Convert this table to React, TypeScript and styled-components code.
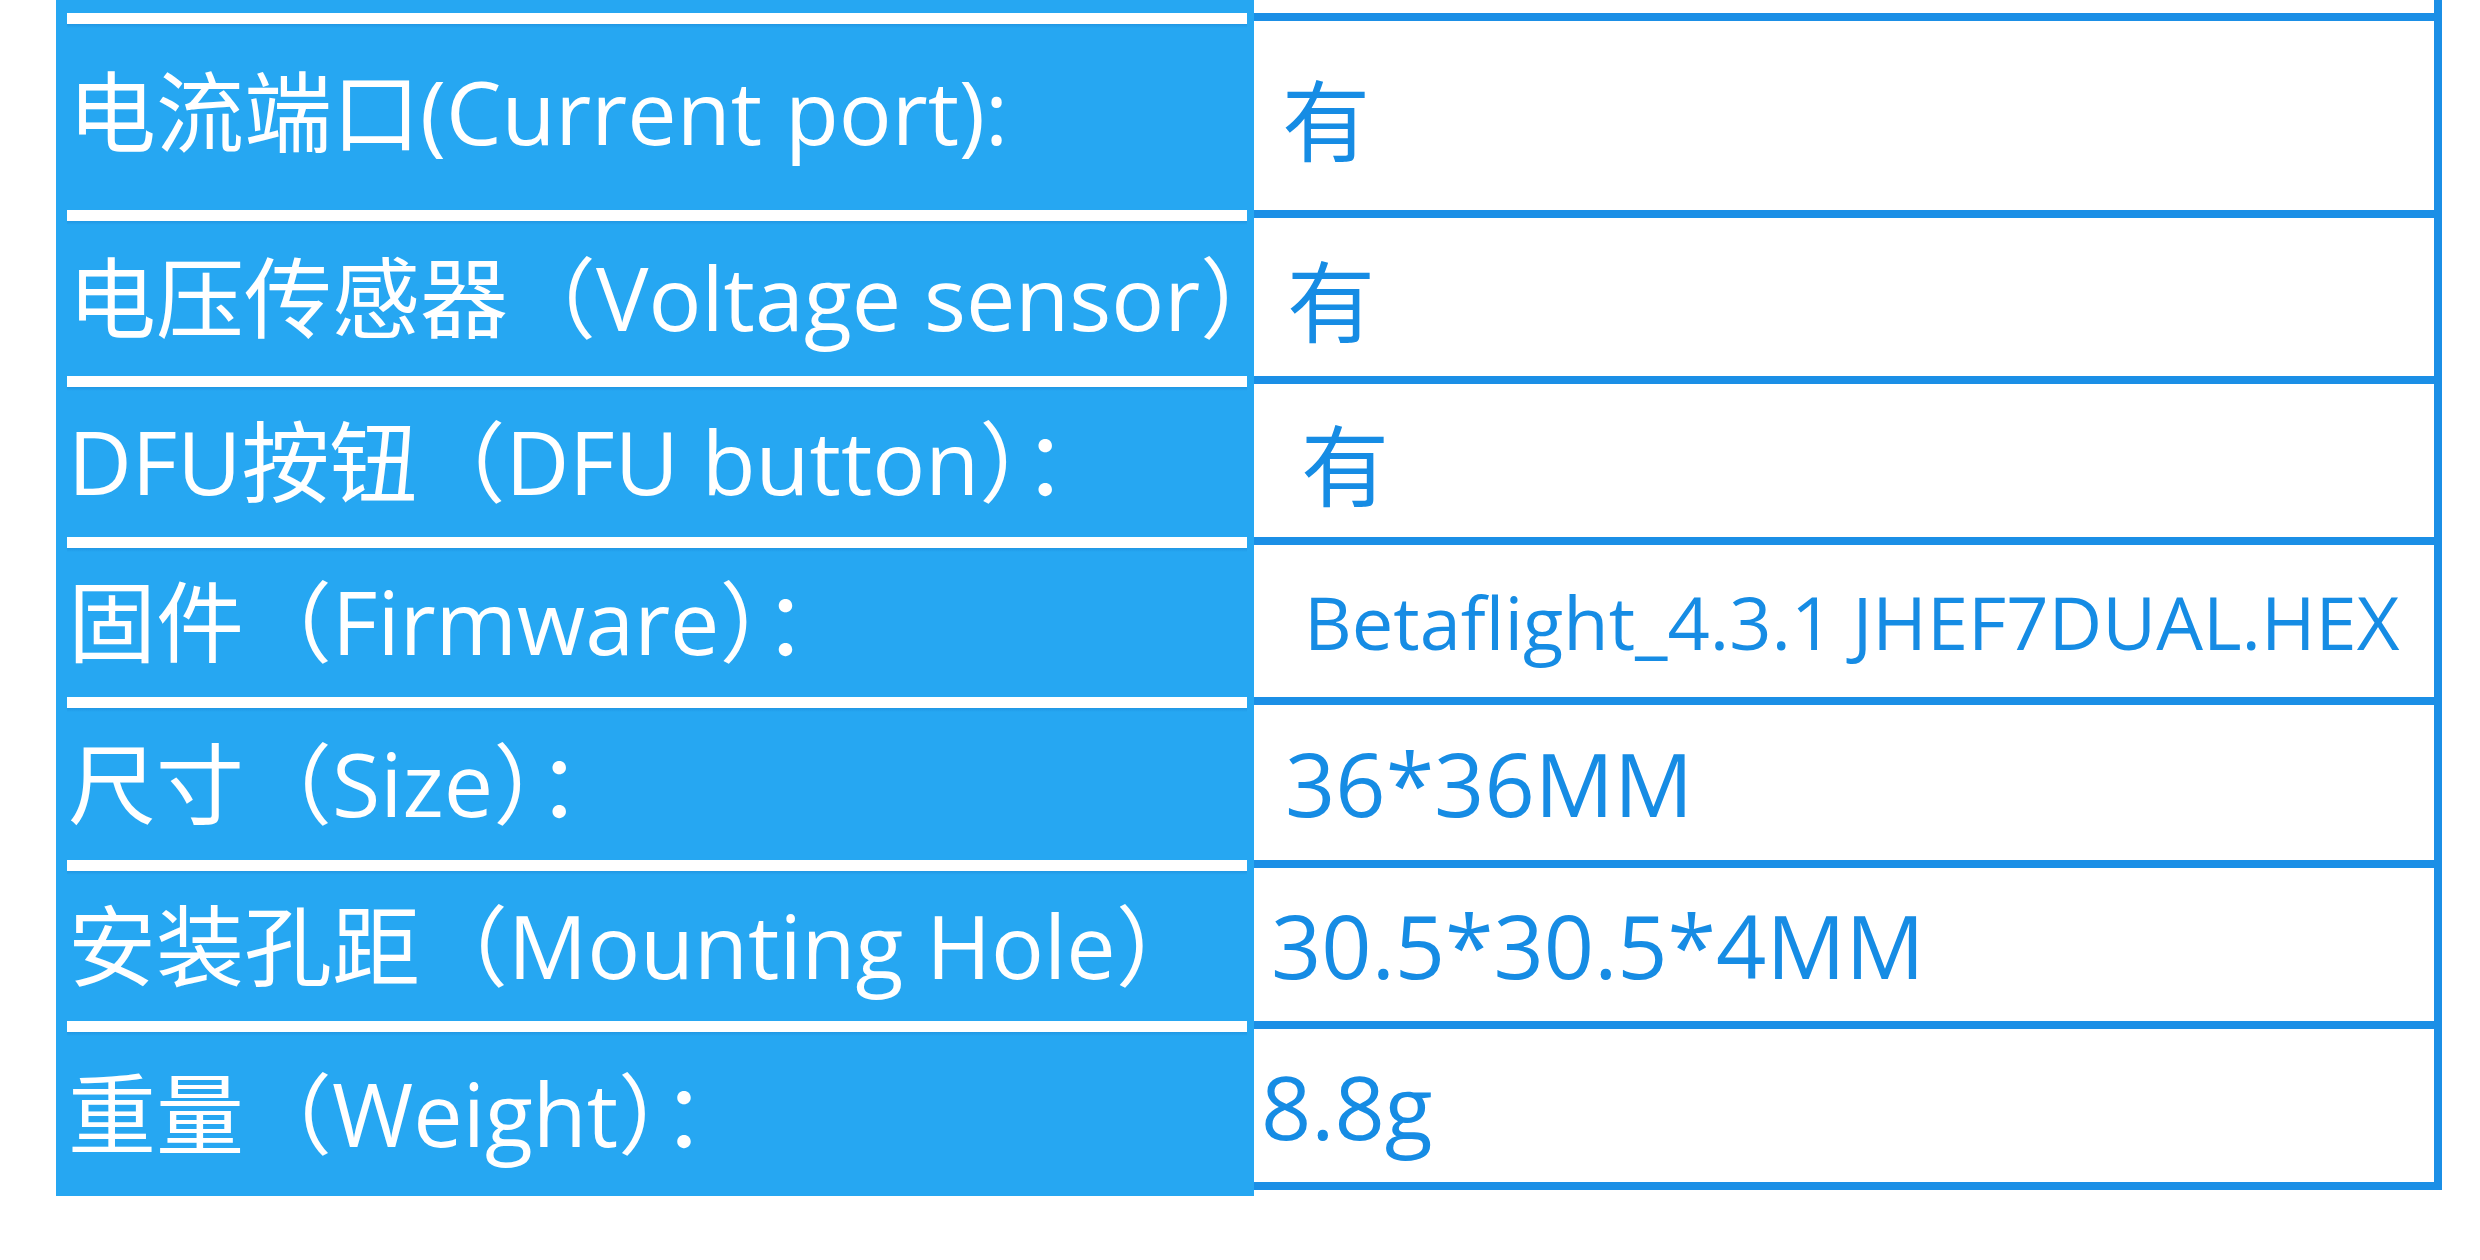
import React from 'react';
import styled, { createGlobalStyle } from 'styled-components';

const labelBlue = "#26a7f2"
const lineBlue = "#1b8fe6"
const textBlue = "#168ce4"

const GlobalStyle = createGlobalStyle`
  html, body {
    margin: 0;
    padding: 0;
    background: #fff;
  }
  body {
    font-family: "Open Sans", "Noto Sans CJK SC", sans-serif;
  }
`

const Page = styled.div`
  width: 2480px;
  height: 1260px;
  overflow: hidden;
  padding-left: 56px;
  box-sizing: border-box;
  background: #fff;
`

const SpecTable = styled.div`
  display: flex;
  flex-direction: column;
  width: 2386px;
`

const Row = styled.div<{ $h: number }>`
  display: grid;
  grid-template-columns: 1198px 1188px;
  min-height: ${p => p.$h}px;
`

const Label = styled.div<{ $stub?: boolean; $lift?: number }>`
  display: flex;
  align-items: center;
  padding-left: 12px;
  padding-bottom: ${p => p.$lift ?? 0}px;
  color: #fff;
  font-size: 88px;
  white-space: nowrap;
  background: ${p => p.$stub
    ? labelBlue
    : `linear-gradient(#fff, #fff) 11px 0 / calc(100% - 18px) 11px no-repeat,
       linear-gradient(rgba(20, 120, 200, 0.35), rgba(20, 120, 200, 0)) 11px 11px / calc(100% - 18px) 4px no-repeat,
       ${labelBlue}`};
`

const Value = styled.div<{ $indent: number; $small?: boolean; $stub?: boolean; $last?: boolean }>`
  display: flex;
  align-items: center;
  box-sizing: border-box;
  padding-left: ${p => p.$indent}px;
  color: ${textBlue};
  font-size: ${p => (p.$small ? 74 : 88)}px;
  white-space: nowrap;
  background: #fff;
  border-top: ${p => (p.$stub ? 'none' : `8px solid ${lineBlue}`)};
  border-right: 8px solid ${lineBlue};
  border-bottom: ${p => (p.$last ? `8px solid ${lineBlue}` : 'none')};
  margin-bottom: ${p => (p.$last ? 6 : 0)}px;
`

interface ISpec {
  label: string
  value: string
  h: number
  indent: number
  small?: boolean
  lift?: number
}

const specs: ISpec[] = [
  { label: "电流端口(Current port):", value: "有", h: 197, indent: 28, lift: 10 },
  { label: "电压传感器（Voltage sensor）", value: "有", h: 166, indent: 33 },
  { label: "DFU按钮（DFU button）：", value: "有", h: 161, indent: 47 },
  { label: "固件（Firmware）：", value: "Betaflight_4.3.1 JHEF7DUAL.HEX", h: 160, indent: 50, small: true },
  { label: "尺寸（Size）：", value: "36*36MM", h: 163, indent: 31 },
  { label: "安装孔距（Mounting Hole）", value: "30.5*30.5*4MM", h: 161, indent: 17 },
  { label: "重量（Weight）：", value: "8.8g", h: 175, indent: 7 },
]

function App() {
  return (
    <Page>
      <GlobalStyle />
      <SpecTable>
        <Row $h={13}>
          <Label $stub />
          <Value $stub $indent={0} />
        </Row>
        {specs.map((s, i) => (
          <Row key={s.label} $h={s.h}>
            <Label $lift={s.lift}>{s.label}</Label>
            <Value $indent={s.indent} $small={s.small} $last={i === specs.length - 1}>
              {s.value}
            </Value>
          </Row>
        ))}
      </SpecTable>
    </Page>
  );
}

export default App;
